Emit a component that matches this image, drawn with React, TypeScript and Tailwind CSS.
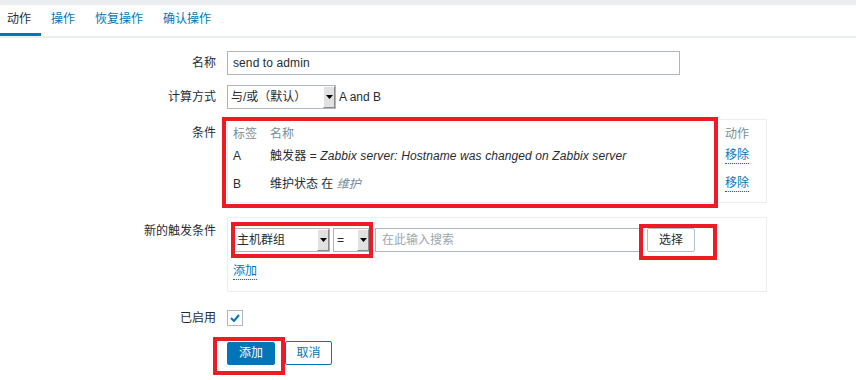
import React from "react";

const font = "font-['Liberation_Sans','Noto_Sans_CJK_SC',sans-serif]";

const Arrow = () => (
  <span className="flex h-full w-[12px] items-center justify-center border-l border-t border-l-white border-t-white border-r border-b border-r-[#8a8a8a] border-b-[#8a8a8a] bg-[#e1e1e1]">
    <svg width="7" height="4" viewBox="0 0 7 4">
      <path d="M0 0h7L3.5 4z" fill="#000" />
    </svg>
  </span>
);

const Select = ({ width, text }: { width: string; text: string }) => (
  <div className={`flex h-[24px] ${width} border border-[#aeb6bb] bg-white`}>
    <span className="flex-1 truncate pl-[3px] text-[12px] leading-[22px] text-[#1f2c33]">
      {text}
    </span>
    <Arrow />
  </div>
);

const Row = ({
  label,
  labelClass = "pt-[5px]",
  rowClass = "",
  children,
}: {
  label: string;
  labelClass?: string;
  rowClass?: string;
  children: React.ReactNode;
}) => (
  <div className={`flex ${rowClass}`}>
    <div className={`w-[216px] text-right text-[12px] text-[#1f2c33] ${labelClass}`}>
      {label}
    </div>
    <div className="ml-[11px] flex-1">{children}</div>
  </div>
);

const DottedLink = ({ text }: { text: string }) => (
  <span className="border-b border-dotted border-[#0275b8] pb-[1px] text-[12px] leading-[14px] text-[#0275b8]">
    {text}
  </span>
);

const Tab = ({ name, active = false, first = false }: { name: string; active?: boolean; first?: boolean }) => (
  <div
    className={`flex h-[31px] items-center text-[12px] ${first ? "pl-[7px] pr-[10px]" : "px-[10px]"} ${
      active ? "border-b-[3px] border-[#0275b8] text-[#1f2c33]" : "border-b-[3px] border-transparent text-[#0275b8]"
    }`}
  >
    {name}
  </div>
);

export default function App() {
  return (
    <div className={`relative h-[380px] w-[856px] overflow-hidden bg-white ${font}`}>
      <div className="h-[5px] bg-[#ebeef0]" />
      <div className="flex border-b-[2px] border-[#ebeef0]">
        <Tab name="动作" active first />
        <Tab name="操作" />
        <Tab name="恢复操作" />
        <Tab name="确认操作" />
      </div>

      <div className="mt-[13px] flex flex-col">
        <Row label="名称" labelClass="leading-[24px]">
          <div className="h-[24px] w-[453px] border border-[#aeb6bb] pl-[5px] text-[12px] leading-[22px] tracking-[0.1px] text-[#1f2c33]">
            send to admin
          </div>
        </Row>

        <Row label="计算方式" labelClass="leading-[24px]" rowClass="mt-[10px]">
          <div className="flex items-center">
            <Select width="w-[109px]" text="与/或（默认）" />
            <span className="ml-[3px] text-[12px] text-[#1f2c33]">A and B</span>
          </div>
        </Row>

        <Row label="条件" labelClass="pt-[5px]" rowClass="mt-[10px]">
          <div className="h-[84px] w-[540px] border border-[#ebeef0] px-[5px] pt-[5px] text-[12px]">
            <div className="flex h-[18px] items-center text-[#768d99]">
              <span className="w-[37px]">标签</span>
              <span className="w-[455px]">名称</span>
              <span>动作</span>
            </div>
            <div className="flex h-[26px] items-center text-[#1f2c33]">
              <span className="w-[37px]">A</span>
              <span className="w-[455px] tracking-[0.1px]">
                触发器 = <i>Zabbix server: Hostname was changed on Zabbix server</i>
              </span>
              <DottedLink text="移除" />
            </div>
            <div className="flex h-[30px] items-center text-[#1f2c33]">
              <span className="w-[37px]">B</span>
              <span className="w-[455px]">
                维护状态 在 <i className="text-[#768d99]">维护</i>
              </span>
              <DottedLink text="移除" />
            </div>
          </div>
        </Row>

        <Row label="新的触发条件" labelClass="pt-[5px]" rowClass="mt-[14px]">
          <div className="h-[75px] w-[540px] border border-[#ebeef0] px-[5px] pt-[10px]">
            <div className="flex items-center">
              <Select width="w-[97px]" text="主机群组" />
              <div className="ml-[3px]">
                <Select width="w-[37px]" text="=" />
              </div>
              <div className="ml-[5px] h-[24px] w-[268px] border border-[#aeb6bb] pl-[6px] text-[12px] leading-[22px] text-[#9aa7ae]">
                在此输入搜索
              </div>
              <button className="ml-[4px] h-[24px] w-[48px] rounded-[2px] border border-[#b5bec3] bg-white text-[12px] text-[#1f2c33]">
                选择
              </button>
            </div>
            <div className="mt-[12px] flex h-[16px] items-center">
              <DottedLink text="添加" />
            </div>
          </div>
        </Row>

        <Row label="已启用" labelClass="leading-[16px]" rowClass="mt-[18px]">
          <div className="flex h-[16px] w-[16px] items-center justify-center border border-[#aeb6bb] bg-white">
            <svg width="10" height="8" viewBox="0 0 10 8">
              <path d="M1 4l3 3 5-6" fill="none" stroke="#0275b8" strokeWidth="2" />
            </svg>
          </div>
        </Row>

        <div className="ml-[227px] mt-[15px] flex items-center">
          <button className="h-[23px] w-[48px] rounded-[2px] border border-[#0275b8] bg-[#0275b8] text-[12px] text-white">
            添加
          </button>
          <button className="ml-[10px] h-[24px] w-[47px] rounded-[2px] border border-[#0275b8] bg-white text-[12px] text-[#0275b8]">
            取消
          </button>
        </div>
      </div>

      {/* red highlight boxes */}
      <div className="absolute left-[222px] top-[117px] h-[91px] w-[496px] border-[4px] border-[#ed1c24]" />
      <div className="absolute left-[231px] top-[222px] h-[36px] w-[142px] border-[4px] border-[#ed1c24]" />
      <div className="absolute left-[639px] top-[224px] h-[36px] w-[78px] border-[4px] border-[#ed1c24]" />
      <div className="absolute left-[213px] top-[337px] h-[38px] w-[72px] border-[4px] border-[#ed1c24]" />
    </div>
  );
}
